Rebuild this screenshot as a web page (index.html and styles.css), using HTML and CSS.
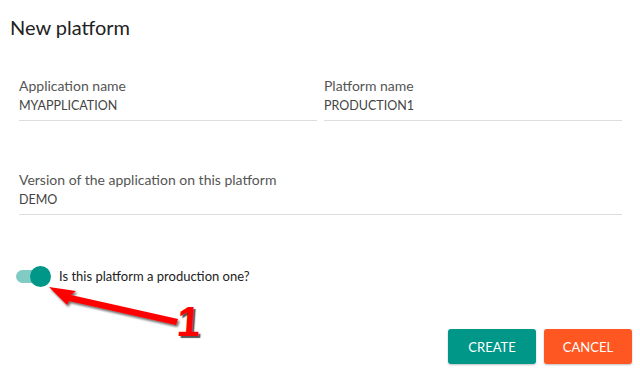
FILE: index.html
```html
<!DOCTYPE html>
<html lang="en">
<head>
  <meta charset="UTF-8">
  <title>New platform</title>
  <link rel="stylesheet" href="styles.css">
</head>
<body>
  <div class="dialog">
    <h1 class="title">New platform</h1>

    <div class="row">
      <div class="field">
        <label>Application name</label>
        <div class="value">MYAPPLICATION</div>
      </div>
      <div class="field">
        <label>Platform name</label>
        <div class="value">PRODUCTION1</div>
      </div>
    </div>

    <div class="row">
      <div class="field">
        <label>Version of the application on this platform</label>
        <div class="value">DEMO</div>
      </div>
    </div>

    <div class="switch-row">
      <span class="switch"><span class="knob"></span></span>
      <span class="switch-label">Is this platform a production one?</span>
    </div>

    <div class="actions">
      <button class="btn create">CREATE</button>
      <button class="btn cancel">CANCEL</button>
    </div>

    <!-- annotation -->
    <svg class="arrow" width="200" height="60" viewBox="0 0 200 60">
      <defs>
        <filter id="shadow" x="-10%" y="-30%" width="130%" height="180%">
          <feDropShadow dx="1.5" dy="2" stdDeviation="1" flood-color="#000" flood-opacity="0.6"/>
        </filter>
      </defs>
      <polygon filter="url(#shadow)" fill="#f00"
        points="9,7 36,11 31,15 138,39 136,45 29,21 27,25"/>
    </svg>
    <span class="step">1</span>
  </div>
</body>
</html>
```

FILE: styles.css
```css
body {
  margin: 0;
  background: #fff;
  font-family: Lato, "Open Sans", sans-serif;
  color: #333;
}

.dialog {
  position: relative;
  width: 640px;
  height: 373px;
  box-sizing: border-box;
  padding: 12px 18px 9px 19px;
  display: flex;
  flex-direction: column;
}

.title {
  margin: 0 0 0 -9px;
  font-size: 20px;
  font-weight: 400;
  color: #222;
  line-height: 30px;
}

.row {
  display: flex;
  gap: 7px;
  margin-top: 35px;
}

.row + .row {
  margin-top: 50px;
}

.field {
  flex: 1;
  border-bottom: 1px solid #ddd;
  padding-bottom: 6px;
}

.field label {
  display: block;
  font-size: 14px;
  color: #555;
  line-height: 18px;
}

.field .value {
  margin-top: 3px;
  font-size: 12.5px;
  color: #444;
  line-height: 16px;
}

.switch-row {
  display: flex;
  align-items: center;
  margin: 53px 0 0 -3px;
  gap: 9px;
}

.switch {
  position: relative;
  width: 34px;
  height: 13px;
  border-radius: 7px;
  background: #80cbc4;
}

.knob {
  position: absolute;
  right: -1px;
  top: -4px;
  width: 21px;
  height: 21px;
  border-radius: 50%;
  background: #009688;
}

.switch-label {
  font-size: 13px;
  color: #222;
}

.actions {
  margin-top: auto;
  display: flex;
  justify-content: flex-end;
  gap: 8px;
  margin-right: -10px;
}

.btn {
  width: 88px;
  height: 35px;
  border: none;
  border-radius: 3px;
  color: #fff;
  font-family: Lato, sans-serif;
  font-size: 13px;
  box-shadow: 0 1px 2px rgba(0, 0, 0, 0.25);
}

.create {
  background: #009688;
}

.cancel {
  background: #ff5722;
}

.arrow {
  position: absolute;
  left: 40px;
  top: 280px;
}

.step {
  position: absolute;
  left: 177px;
  top: 298px;
  font-family: "Liberation Sans", Arial, sans-serif;
  font-weight: 700;
  font-size: 42px;
  color: #f00;
  transform: skewX(-4deg);
  text-shadow: 2px 2px 1px #555;
}
```
